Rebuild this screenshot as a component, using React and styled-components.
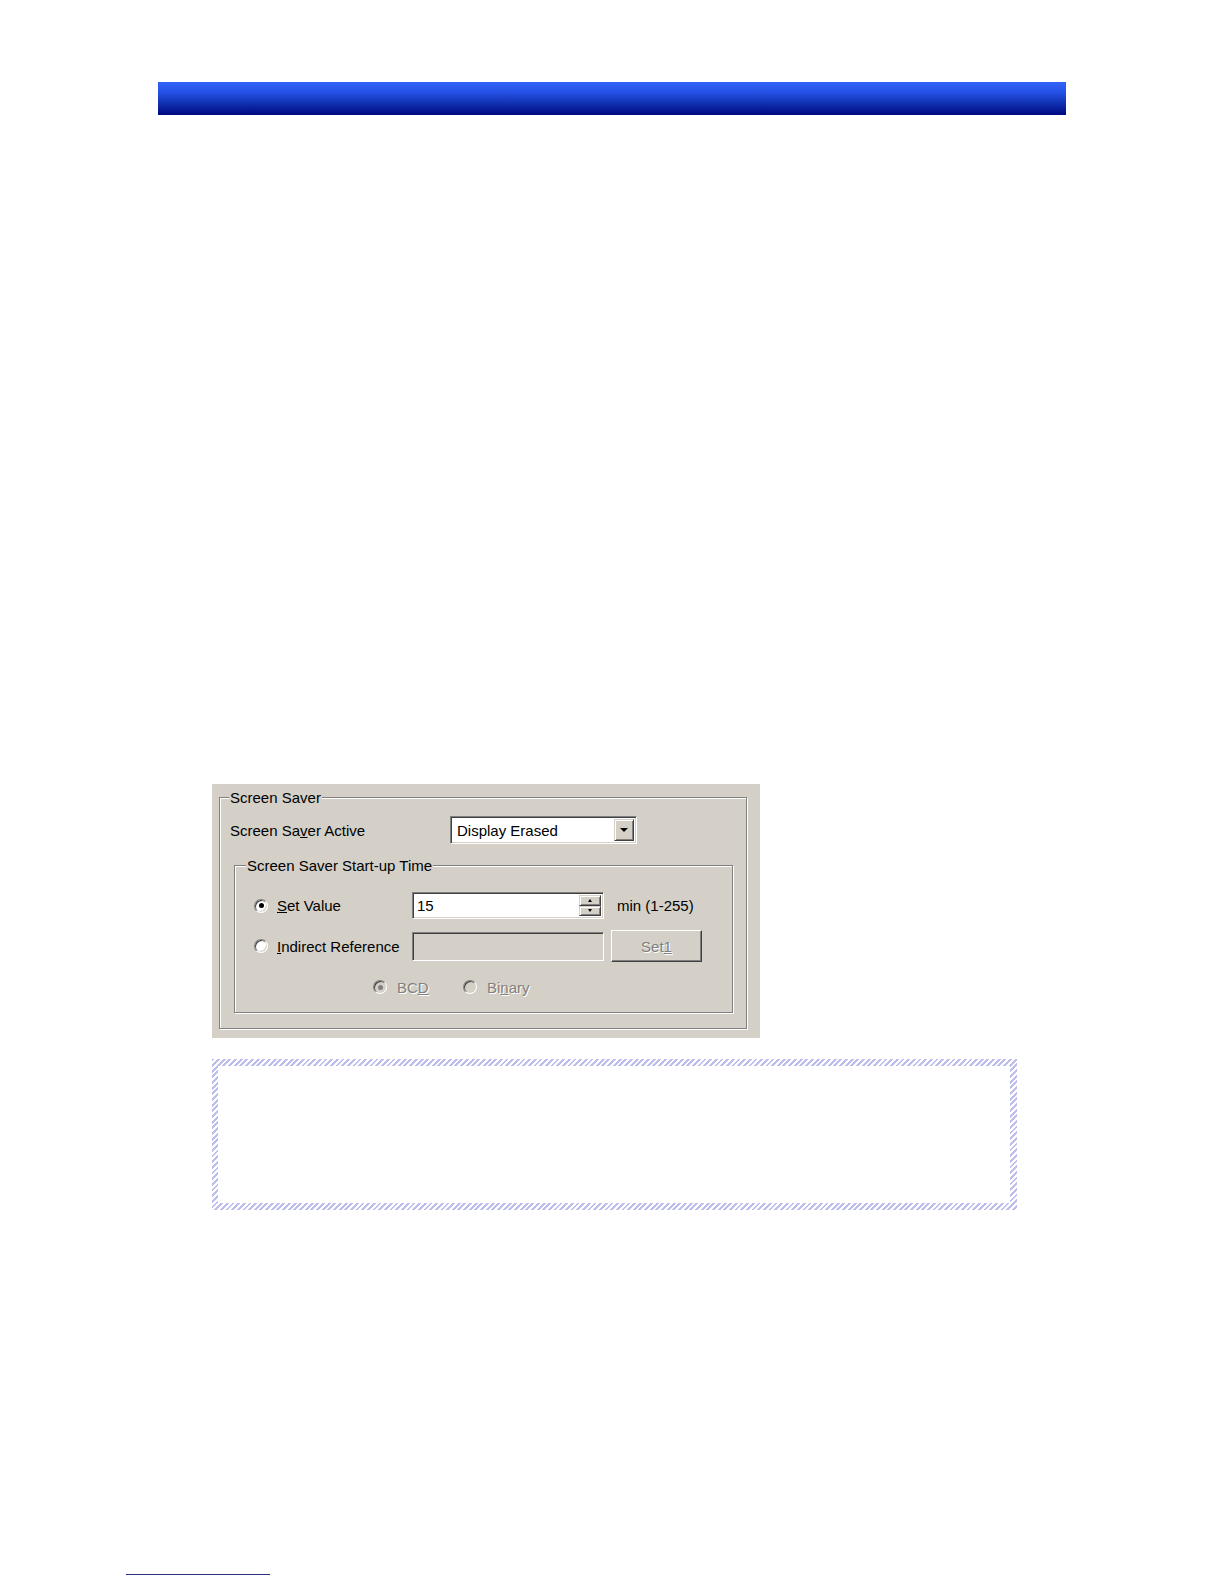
import React from "react";
import styled, { createGlobalStyle, css } from "styled-components";

const GlobalStyle = createGlobalStyle`
  html, body { margin: 0; padding: 0; background: #ffffff; }
  body { font-family: "Liberation Sans", Arial, sans-serif; }
`;

const Page = styled.div`
  width: 1224px;
  min-height: 1584px;
  padding-top: 82px;
  box-sizing: border-box;
  overflow: hidden;
`;

const TitleBar = styled.div`
  margin-left: 158px;
  width: 908px;
  height: 33px;
  background: linear-gradient(to bottom, #2f63f5 0%, #2652e6 30%, #1030b0 65%, #00077f 100%);
`;

const Dialog = styled.div`
  margin: 669px 0 0 212px;
  width: 548px;
  height: 254px;
  box-sizing: border-box;
  background: #d4d0c8;
  padding: 13px 0 0 7px;
  font-family: "Liberation Sans", Arial, sans-serif;
  font-size: 15px;
  color: #000;
`;

const GroupBox = styled.div`
  position: relative;
  box-sizing: border-box;
  width: ${(p) => p.$w}px;
  height: ${(p) => p.$h}px;
  margin-top: ${(p) => p.$mt || 0}px;
  margin-left: ${(p) => p.$ml || 0}px;
  padding: ${(p) => p.$pad};
  border: 1px solid #808080;
  box-shadow: inset 1px 1px 0 #ffffff, 1px 1px 0 #ffffff;
`;

const Caption = styled.span`
  position: absolute;
  top: -9px;
  left: ${(p) => p.$left}px;
  padding: 0 1px;
  line-height: 17px;
  background: #d4d0c8;
  white-space: nowrap;
`;

const Row = styled.div`
  display: flex;
  align-items: center;
  height: ${(p) => p.$h}px;
  margin-top: ${(p) => p.$mt || 0}px;
`;

const FieldLabel = styled.span`
  width: ${(p) => p.$w}px;
  flex: none;
  white-space: nowrap;
`;

const sunken = css`
  box-sizing: border-box;
  border: 1px solid;
  border-color: #808080 #ffffff #ffffff #808080;
  box-shadow: inset 1px 1px 0 #404040, inset -1px -1px 0 #d4d0c8;
`;

const raised = css`
  box-sizing: border-box;
  border: 1px solid;
  border-color: #d4d0c8 #404040 #404040 #d4d0c8;
  box-shadow: inset 1px 1px 0 #ffffff, inset -1px -1px 0 #808080;
  background: #d4d0c8;
`;

const Combo = styled.div`
  ${sunken};
  width: 187px;
  height: 28px;
  background: #fff;
  display: flex;
  align-items: center;
  padding: 2px;
`;

const ComboText = styled.span`
  flex: 1;
  padding-left: 4px;
  white-space: nowrap;
`;

const ArrowButton = styled.div`
  ${raised};
  width: 20px;
  height: 22px;
  display: flex;
  align-items: center;
  justify-content: center;
`;

const Triangle = styled.span`
  width: 0;
  height: 0;
  border-left: ${(p) => p.$s}px solid transparent;
  border-right: ${(p) => p.$s}px solid transparent;
  ${(p) =>
    p.$up
      ? css`border-bottom: ${Math.ceil(p.$s)}px solid ${p.$c || "#000"};`
      : css`border-top: ${Math.ceil(p.$s)}px solid ${p.$c || "#000"};`}
`;

const RadioWrap = styled.label`
  display: flex;
  align-items: center;
  width: ${(p) => (p.$w ? `${p.$w}px` : "auto")};
  margin-left: ${(p) => p.$ml || 0}px;
  flex: none;
  white-space: nowrap;
  color: ${(p) => (p.$disabled ? "#808080" : "#000")};
  text-shadow: ${(p) => (p.$disabled ? "1px 1px 0 #ffffff" : "none")};
`;

const RadioCircle = styled.span`
  width: 14px;
  height: 14px;
  box-sizing: border-box;
  border-radius: 50%;
  border: 1px solid;
  border-color: #808080 #ffffff #ffffff #808080;
  box-shadow: inset 1px 1px 0 #404040, inset -1px -1px 0 #d4d0c8;
  background: ${(p) => (p.$disabled ? "#d4d0c8" : "#ffffff")};
  display: flex;
  align-items: center;
  justify-content: center;
  flex: none;
  margin-right: ${(p) => p.$gap}px;
  text-shadow: none;
`;

const RadioDot = styled.span`
  width: 5px;
  height: 5px;
  border-radius: 50%;
  background: ${(p) => (p.$disabled ? "#808080" : "#000")};
`;

const TextField = styled.div`
  ${sunken};
  width: 192px;
  height: ${(p) => p.$h}px;
  background: ${(p) => (p.$disabled ? "#d4d0c8" : "#ffffff")};
  display: flex;
  align-items: center;
  padding: 2px;
`;

const FieldValue = styled.span`
  flex: 1;
  padding-left: 2px;
`;

const Spinner = styled.div`
  display: flex;
  flex-direction: column;
  width: 22px;
  height: 100%;
`;

const SpinButton = styled.div`
  ${raised};
  flex: 1;
  display: flex;
  align-items: center;
  justify-content: center;
`;

const Suffix = styled.span`
  margin-left: 13px;
  white-space: nowrap;
`;

const PushButton = styled.div`
  ${raised};
  border-color: #ffffff #404040 #404040 #ffffff;
  box-shadow: inset -1px -1px 0 #808080;
  width: 91px;
  height: 32px;
  margin-left: 7px;
  display: flex;
  align-items: center;
  justify-content: center;
  color: #808080;
  text-shadow: 1px 1px 0 #ffffff;
`;

const HatchBox = styled.div`
  margin: 21px 0 0 212px;
  width: 805px;
  height: 151px;
  box-sizing: border-box;
  padding: 7px 7px 7px 6px;
  background: repeating-linear-gradient(
    135deg,
    #bdbdee 0px,
    #bdbdee 2px,
    #ffffff 2px,
    #ffffff 4px
  );
`;

const HatchInner = styled.div`
  width: 100%;
  height: 100%;
  background: #ffffff;
`;

const FooterRule = styled.div`
  margin: 364px 0 0 126px;
  width: 144px;
  height: 1px;
  background: #2a347e;
`;

function Radio({ checked, disabled, children, w, ml, gap = 9 }) {
  return (
    <RadioWrap $w={w} $ml={ml} $disabled={disabled}>
      <RadioCircle $disabled={disabled} $gap={gap}>
        {checked && <RadioDot $disabled={disabled} />}
      </RadioCircle>
      <span>{children}</span>
    </RadioWrap>
  );
}

export default function App() {
  return (
    <>
      <GlobalStyle />
      <Page>
        <TitleBar />
        <Dialog>
          <GroupBox $w={528} $h={232} $pad="18px 10px 0 10px">
            <Caption $left={9}>Screen Saver</Caption>
            <Row $h={28}>
              <FieldLabel $w={220}>
                Screen Sa<u>v</u>er Active
              </FieldLabel>
              <Combo>
                <ComboText>Display Erased</ComboText>
                <ArrowButton>
                  <Triangle $s={4} />
                </ArrowButton>
              </Combo>
            </Row>
            <GroupBox $w={499} $h={148} $mt={21} $ml={4} $pad="26px 0 0 19px">
              <Caption $left={11}>Screen Saver Start-up Time</Caption>
              <Row $h={27}>
                <Radio checked w={158} gap={9}>
                  <u>S</u>et Value
                </Radio>
                <TextField $h={27}>
                  <FieldValue>15</FieldValue>
                  <Spinner>
                    <SpinButton>
                      <Triangle $s={2.5} $up />
                    </SpinButton>
                    <SpinButton>
                      <Triangle $s={2.5} />
                    </SpinButton>
                  </Spinner>
                </TextField>
                <Suffix>min (1-255)</Suffix>
              </Row>
              <Row $h={32} $mt={11}>
                <Radio w={158}>
                  <u>I</u>ndirect Reference
                </Radio>
                <TextField $h={29} $disabled />
                <PushButton>
                  <span>
                    Set<u>1</u>
                  </span>
                </PushButton>
              </Row>
              <Row $h={18} $mt={16}>
                <Radio checked disabled ml={119} w={90} gap={10}>
                  BC<u>D</u>
                </Radio>
                <Radio disabled gap={10}>
                  Bi<u>n</u>ary
                </Radio>
              </Row>
            </GroupBox>
          </GroupBox>
        </Dialog>
        <HatchBox>
          <HatchInner />
        </HatchBox>
        <FooterRule />
      </Page>
    </>
  );
}
